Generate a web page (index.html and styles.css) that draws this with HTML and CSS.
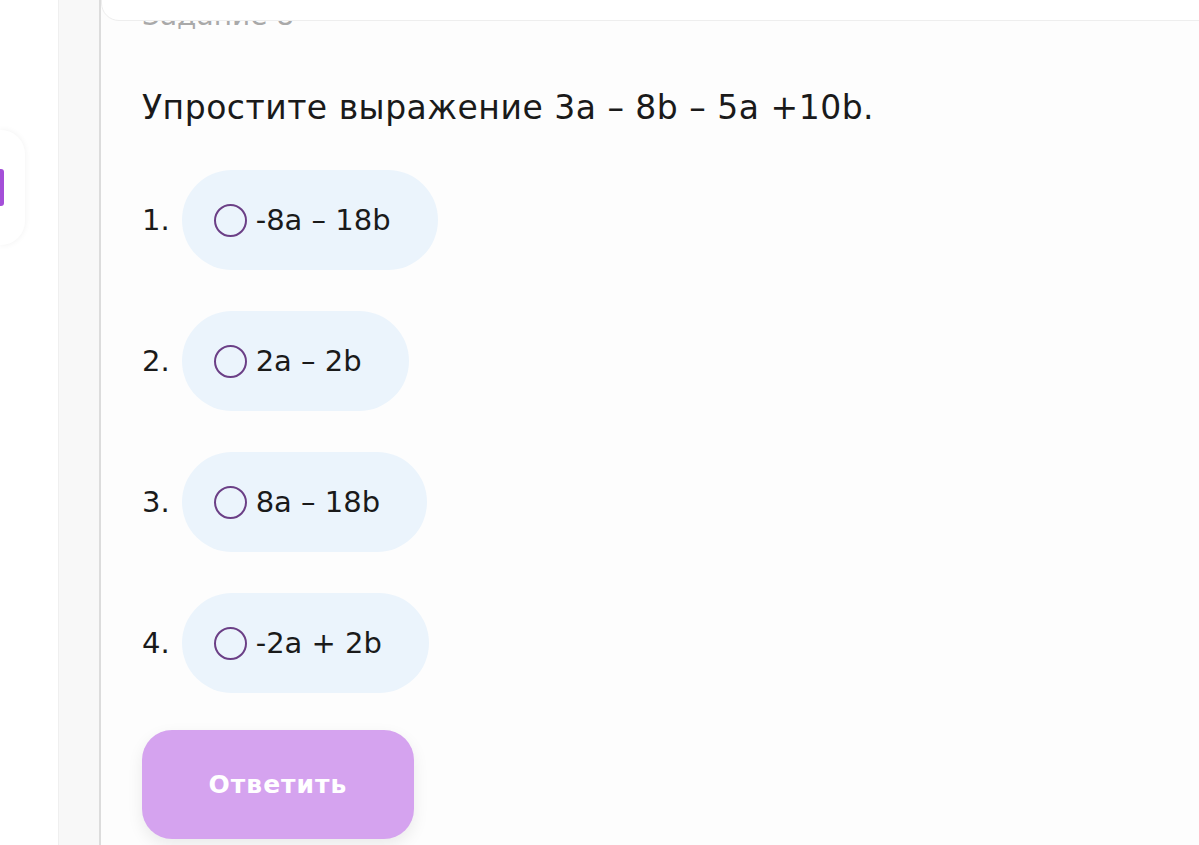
FILE: index.html
```html
<!DOCTYPE html>
<html lang="ru">
<head>
    <meta charset="UTF-8">
    <meta name="viewport" content="width=device-width, initial-scale=1.0">
    <title>Задание 8</title>
    <link rel="stylesheet" href="styles.css">
</head>
<body>
    <div class="page">
        <div class="left-col">
            <div class="side-card"><span class="side-mark"></span></div>
        </div>
        <div class="rail"></div>
        <main class="main">
            <div class="top-card"></div>
            <div class="task">
                <div class="task-label">Задание 8</div>
                <h1 class="question">Упростите выражение 3а – 8b – 5a +10b.</h1>
                <ol class="answers">
                    <li class="answer"><span class="num">1.</span><label class="option"><span class="radio"></span>-8a – 18b</label></li>
                    <li class="answer"><span class="num">2.</span><label class="option"><span class="radio"></span>2a – 2b</label></li>
                    <li class="answer"><span class="num">3.</span><label class="option"><span class="radio"></span>8a – 18b</label></li>
                    <li class="answer"><span class="num">4.</span><label class="option"><span class="radio"></span>-2a + 2b</label></li>
                </ol>
                <button class="btn">Ответить</button>
            </div>
        </main>
    </div>
</body>
</html>
```

FILE: styles.css
```css
body {
    margin: 0;
    padding: 0;
    font-family: "DejaVu Sans", sans-serif;
    background: #fff;
    color: #1a1a1a;
    overflow: hidden;
}
.page {
    display: flex;
    height: 845px;
}
.left-col {
    width: 58px;
    padding-top: 130px;
    background: #fff;
}
.side-card {
    width: 25px;
    height: 115px;
    border-radius: 0 24px 24px 0;
    background: #fff;
    box-shadow: 0 0 6px rgba(0, 0, 0, 0.06);
    display: flex;
    align-items: center;
}
.side-mark {
    width: 4px;
    height: 37px;
    border-radius: 0 3px 3px 0;
    background: #a44fd8;
}
.rail {
    width: 40px;
    background: #f8f8f8;
    border-left: 1px solid #efefef;
    border-right: 2px solid #dcdcdc;
}
.main {
    flex: 1;
    position: relative;
    background: #fdfdfd;
    overflow: hidden;
}
.top-card {
    position: absolute;
    top: -40px;
    left: 0;
    right: -20px;
    height: 59px;
    background: #fff;
    border: 1px solid #eeeeee;
    border-radius: 0 0 18px 18px;
    z-index: 2;
}
.task {
    padding-left: 41px;
}
.task-label {
    font-size: 28px;
    color: #a9a9a9;
    margin-top: -2px;
    height: 36px;
    line-height: 36px;
}
.question {
    font-size: 33px;
    font-weight: normal;
    letter-spacing: 0.5px;
    margin: 54px 0 0;
    line-height: 40px;
}
.answers {
    list-style: none;
    margin: 42px 0 0;
    padding: 0;
    display: flex;
    flex-direction: column;
    gap: 41px;
}
.answer {
    display: flex;
    align-items: center;
    gap: 12px;
}
.num {
    font-size: 29px;
}
.option {
    display: flex;
    align-items: center;
    gap: 9px;
    height: 100px;
    padding: 0 47px 0 32px;
    border-radius: 50px;
    background: #ebf4fc;
    font-size: 29px;
}
.radio {
    width: 29px;
    height: 29px;
    border: 2px solid #6b3f86;
    border-radius: 50%;
}
.btn {
    margin-top: 37px;
    width: 272px;
    height: 109px;
    border: none;
    border-radius: 30px;
    background: #d5a3ef;
    color: #fff;
    font-family: "DejaVu Sans", sans-serif;
    font-size: 25px;
    font-weight: bold;
    letter-spacing: 1px;
    box-shadow: 0 6px 16px rgba(0, 0, 0, 0.08);
    cursor: pointer;
}
```
